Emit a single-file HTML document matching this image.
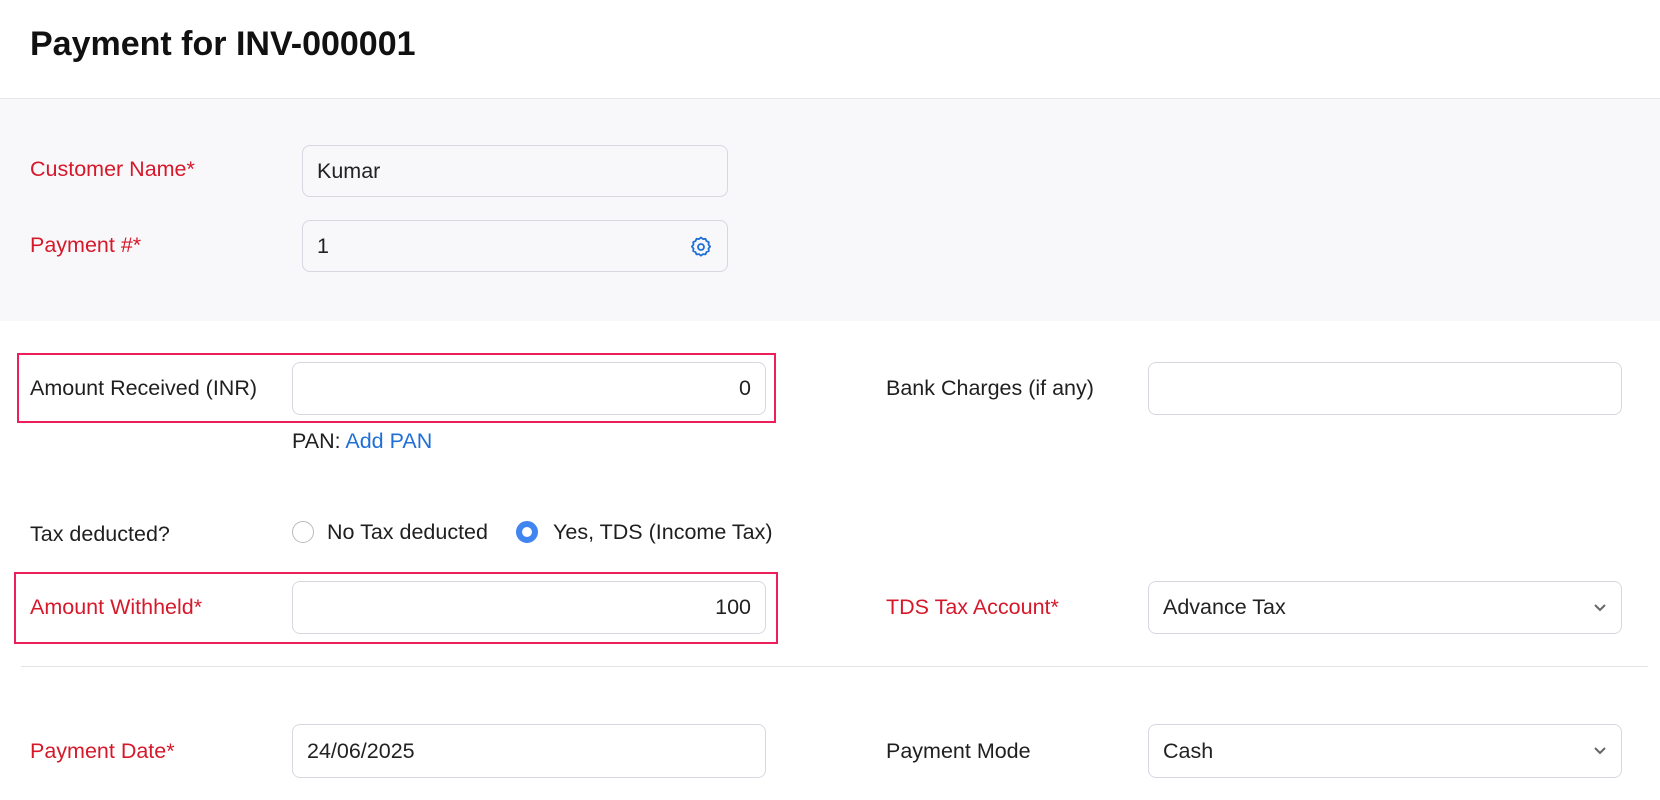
<!DOCTYPE html>
<html><head><style>
*{box-sizing:border-box;margin:0;padding:0}
body{width:1660px;height:800px;overflow:hidden;background:#fff;font-family:"Liberation Sans",sans-serif;color:#1f1f1f;font-size:21.5px;position:relative}
.a{position:absolute}
h1{position:absolute;left:30px;top:25px;font-size:34px;font-weight:bold;color:#111}
.gray{position:absolute;left:0;top:98px;width:1660px;height:223px;background:#f8f8fa;border-top:1px solid #e8e8ec}
.lbl{position:absolute;font-size:21.5px;line-height:24px;white-space:nowrap}
.red{color:#d6182a}
.inp{position:absolute;border:1px solid #d7d7e0;border-radius:8px;background:#fff;padding:0 14px;display:flex;align-items:center;font-size:21.5px;color:#222}
.r{justify-content:flex-end}
.box{position:absolute;border:2px solid #ec1f5b}
.chev{position:absolute;right:14px;top:50%;margin-top:-5px}
</style></head><body>
<h1>Payment for INV-000001</h1>
<div class="gray"></div>
<div class="lbl red" style="left:30px;top:157px">Customer Name*</div>
<div class="inp" style="left:302px;top:145px;width:426px;height:52px;background:#f8f8fa">Kumar</div>
<div class="lbl red" style="left:30px;top:233px">Payment #*</div>
<div class="inp" style="left:302px;top:220px;width:426px;height:52px;background:#f8f8fa">1
<svg class="a" style="right:14px;top:14px" width="24" height="24" viewBox="0 0 24 24" fill="none" stroke="#1f6fd6" stroke-width="1.8"><path d="M12 2.5l2 1.6 2.5-.3 1 2.3 2.3 1-.3 2.5 1.6 2-1.6 2 .3 2.5-2.3 1-1 2.3-2.5-.3-2 1.6-2-1.6-2.5.3-1-2.3-2.3-1 .3-2.5-1.6-2 1.6-2-.3-2.5 2.3-1 1-2.3 2.5.3z" stroke-linejoin="round"/><circle cx="12" cy="12" r="3"/></svg></div>

<div class="box" style="left:17px;top:353px;width:759px;height:70px"></div>
<div class="lbl" style="left:30px;top:376px">Amount Received (INR)</div>
<div class="inp r" style="left:292px;top:362px;width:474px;height:53px">0</div>
<div class="lbl" style="left:886px;top:376px">Bank Charges (if any)</div>
<div class="inp" style="left:1148px;top:362px;width:474px;height:53px"></div>
<div class="lbl" style="left:292px;top:429px">PAN: <span style="color:#1f6fd6">Add PAN</span></div>

<div class="lbl" style="left:30px;top:522px">Tax deducted?</div>
<div class="a" style="left:292px;top:521px;width:22px;height:22px;border:1.5px solid #bbb;border-radius:50%"></div>
<div class="lbl" style="left:327px;top:520px">No Tax deducted</div>
<div class="a" style="left:516px;top:521px;width:22px;height:22px;border:6px solid #3f86f0;border-radius:50%;background:#fff"></div>
<div class="lbl" style="left:553px;top:520px">Yes, TDS (Income Tax)</div>

<div class="box" style="left:14px;top:572px;width:764px;height:72px"></div>
<div class="lbl red" style="left:30px;top:595px">Amount Withheld*</div>
<div class="inp r" style="left:292px;top:581px;width:474px;height:53px">100</div>
<div class="lbl red" style="left:886px;top:595px">TDS Tax Account*</div>
<div class="inp" style="left:1148px;top:581px;width:474px;height:53px">Advance Tax<svg class="chev" width="14" height="10" viewBox="0 0 14 10"><path d="M2 2l5 5 5-5" fill="none" stroke="#666" stroke-width="2"/></svg></div>

<div class="a" style="left:21px;top:666px;width:1627px;height:1px;background:#e3e3e8"></div>

<div class="lbl red" style="left:30px;top:739px">Payment Date*</div>
<div class="inp" style="left:292px;top:724px;width:474px;height:54px">24/06/2025</div>
<div class="lbl" style="left:886px;top:739px">Payment Mode</div>
<div class="inp" style="left:1148px;top:724px;width:474px;height:54px">Cash<svg class="chev" width="14" height="10" viewBox="0 0 14 10"><path d="M2 2l5 5 5-5" fill="none" stroke="#666" stroke-width="2"/></svg></div>
</body></html>
